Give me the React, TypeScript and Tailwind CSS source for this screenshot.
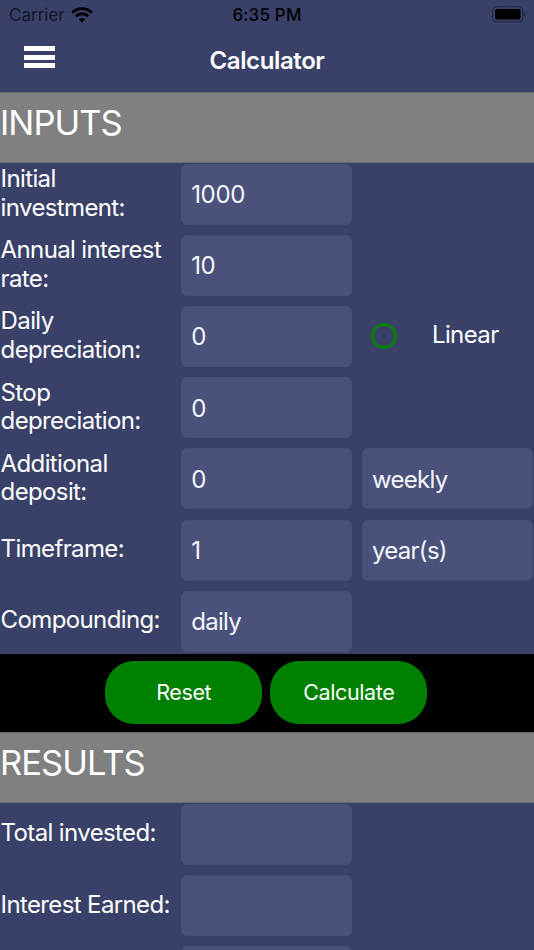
import React, { useState } from 'react';
import clsx from 'clsx';

interface FieldProps {
  value: string;
  label: string;
  onChange?: (value: string) => void;
}

const Field: React.FC<FieldProps> = ({ value, label, onChange }) => (
  <input
    type="text"
    aria-label={label}
    value={value}
    readOnly={!onChange}
    onChange={(e) => onChange?.(e.target.value)}
    className={clsx(
      'h-[61px] w-full min-w-0 rounded-md border border-[#46507a] bg-[#4a527b] pt-px pl-[9px] text-[24px] text-[#f4f5fa] outline-none',
      onChange ? 'tracking-[-0.014em]' : 'tracking-[-0.03em]'
    )}
  />
);

interface RowProps {
  label: string;
  children: React.ReactNode;
}

const Row: React.FC<RowProps> = ({ label, children }) => (
  <div className="grid h-[61.2px] grid-cols-[171.4px_171px_171px] items-center gap-x-[9.8px]">
    <span className="-mt-px pl-[0.6px] text-[24px] leading-[28.5px] tracking-[-0.026em]">{label}</span>
    {children}
  </div>
);

const SectionTitle: React.FC<{ children: string }> = ({ children }) => (
  <h2 className="h-[71px] shrink-0 border-y border-[#6b6d76] bg-[#808080] pt-[9.4px] text-[34.5px] leading-[42px] tracking-[-0.027em]">
    {children}
  </h2>
);

const StatusBar = () => (
  <div className="grid h-[30px] grid-cols-3 items-center px-[9px] text-[17px] text-black">
    <div className="flex items-center gap-[7px]">
      <span className="mt-0.5 text-[#15182a]">Carrier</span>
      <svg className="-ml-px" width="22" height="16" viewBox="0 0 22 16" fill="none" stroke="currentColor" strokeWidth="2.8">
        <path d="M1.3 5.7a13.8 13.8 0 0 1 19.4 0" />
        <path d="M4.8 9.3a8.8 8.8 0 0 1 12.4 0" />
        <path d="M11 15.6 7.8 12.4a4.6 4.6 0 0 1 6.4 0Z" fill="currentColor" stroke="none" />
      </svg>
    </div>
    <span className="mt-0.5 text-center font-medium tracking-[0.01em]">6:35 PM</span>
    <svg className="-mt-0.5 -mr-px justify-self-end" width="34" height="17" viewBox="0 0 34 17">
      <rect x="0.7" y="0.7" width="30" height="15" rx="4" fill="none" stroke="#20253f" strokeWidth="1.1" />
      <rect x="3" y="3" width="25.5" height="10.5" rx="2" fill="#000" />
      <path d="M32.2 6v5c1.5-.8 1.5-4.2 0-5Z" fill="#20253f" />
    </svg>
  </div>
);

const App: React.FC = () => {
  const [initial, setInitial] = useState('1000');
  const [rate, setRate] = useState('10');
  const [depreciation, setDepreciation] = useState('0');
  const [stop, setStop] = useState('0');
  const [deposit, setDeposit] = useState('0');
  const [timeframe, setTimeframe] = useState('1');
  const [linear, setLinear] = useState(false);

  const handleReset = () => {
    setInitial('1000');
    setRate('10');
    setDepreciation('0');
    setStop('0');
    setDeposit('0');
    setTimeframe('1');
    setLinear(false);
  };

  return (
    <div className="flex h-[950px] w-[534px] flex-col overflow-hidden bg-[#394169] font-['Inter',sans-serif] text-white">
      {/* Header */}
      <header className="h-[91.5px] shrink-0">
        <StatusBar />
        <div className="grid h-[60px] grid-cols-3 items-center">
          <button type="button" aria-label="Menu" className="-mt-[6px] ml-6 flex w-[31px] flex-col gap-[3.5px]">
            <span className="h-[5px] bg-white" />
            <span className="h-[5px] bg-white" />
            <span className="h-[5px] bg-white" />
          </button>
          <h1 className="mt-0.5 text-center text-[24px] font-semibold tracking-[-0.016em]">Calculator</h1>
        </div>
      </header>

      {/* Inputs */}
      <SectionTitle>INPUTS</SectionTitle>
      <div className="flex h-[491px] shrink-0 flex-col gap-[10px] pt-[1px]">
        <Row label="Initial investment:">
          <Field label="Initial investment" value={initial} onChange={setInitial} />
        </Row>
        <Row label="Annual interest rate:">
          <Field label="Annual interest rate" value={rate} onChange={setRate} />
        </Row>
        <Row label="Daily depreciation:">
          <Field label="Daily depreciation" value={depreciation} onChange={setDepreciation} />
          <div className="flex items-center pl-[9px]">
            <button
              type="button"
              aria-label="Linear"
              onClick={() => setLinear(!linear)}
              className="flex size-[26px] items-center justify-center rounded-full border-[3px] border-[#0a7f10]"
            >
              {linear && <span className="size-3 rounded-full bg-[#0a7f10]" />}
            </button>
            <span className="-mt-0.5 ml-[35px] text-[24px] tracking-[-0.026em]">Linear</span>
          </div>
        </Row>
        <Row label="Stop depreciation:">
          <Field label="Stop depreciation" value={stop} onChange={setStop} />
        </Row>
        <Row label="Additional deposit:">
          <Field label="Additional deposit" value={deposit} onChange={setDeposit} />
          <Field label="Deposit period" value="weekly" />
        </Row>
        <Row label="Timeframe:">
          <Field label="Timeframe" value={timeframe} onChange={setTimeframe} />
          <Field label="Timeframe unit" value="year(s)" />
        </Row>
        <Row label="Compounding:">
          <Field label="Compounding" value="daily" />
        </Row>
      </div>

      {/* Actions */}
      <div className="flex h-[78px] shrink-0 items-start justify-center gap-2 bg-black pt-[7px] pr-[1.5px] text-[21.5px] tracking-[-0.018em]">
        <button type="button" onClick={handleReset} className="h-[63px] w-[157px] rounded-[29px] bg-[#008000]">
          Reset
        </button>
        <button type="button" className="h-[63px] w-[157px] rounded-[29px] bg-[#008000]">
          Calculate
        </button>
      </div>

      {/* Results */}
      <SectionTitle>RESULTS</SectionTitle>
      <div className="flex flex-col gap-[10px] pt-[1px]">
        <Row label="Total invested:">
          <Field label="Total invested" value="" />
        </Row>
        <Row label="Interest Earned:">
          <Field label="Interest earned" value="" />
        </Row>
        <Row label="">
          <Field label="Total" value="" />
        </Row>
      </div>
    </div>
  );
};

export default App;
